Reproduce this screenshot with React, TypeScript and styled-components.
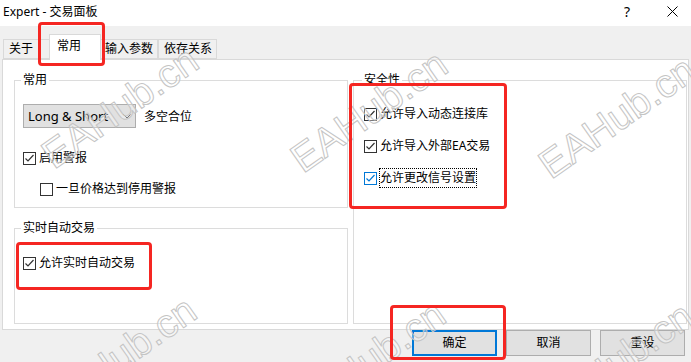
import React from "react";
import styled, { createGlobalStyle } from "styled-components";

const GlobalStyle = createGlobalStyle`
  html, body {
    margin: 0;
    padding: 0;
    background: #f0f0f0;
  }
  body {
    font-family: "Noto Sans", "Noto Sans CJK SC", sans-serif;
    font-size: 12px;
    color: #000;
  }
  * {
    box-sizing: border-box;
  }
`;

const Window = styled.div`
  position: relative;
  width: 691px;
  height: 362px;
  overflow: hidden;
  background: #f0f0f0;
  display: flex;
  flex-direction: column;
`;

const TitleBar = styled.div`
  height: 26px;
  flex: none;
  background: #fff;
  display: flex;
  align-items: center;
  padding-left: 3px;
`;

const Title = styled.div`
  flex: 1;
  line-height: 16px;
  margin-top: -2px;
`;

const TitleButton = styled.div<{ $w: number; $gap?: number }>`
  width: ${(p) => p.$w}px;
  margin-right: ${(p) => p.$gap ?? 0}px;
  height: 26px;
  display: flex;
  align-items: center;
  justify-content: center;
  font-size: 14px;
  margin-top: -4px;
`;

const Body = styled.div`
  flex: none;
  display: flex;
  flex-direction: column;
  padding: 8px 2px 0;
`;

const TabStrip = styled.div`
  height: 25px;
  display: flex;
  align-items: flex-end;
  padding-left: 1px;
  position: relative;
  z-index: 1;
`;

const Tab = styled.div<{ $active?: boolean }>`
  min-width: ${(p) => (p.$active ? 52 : 48)}px;
  height: ${(p) => (p.$active ? 26 : 20)}px;
  margin: ${(p) => (p.$active ? "0 -2px -1px" : "0")};
  padding: ${(p) => (p.$active ? "0 6px 3px 7px" : "0 4px 0 5px")};
  border: 1px solid #d9d9d9;
  border-bottom: ${(p) => (p.$active ? "none" : "1px solid #d9d9d9")};
  background: ${(p) => (p.$active ? "#fff" : "#f0f0f0")};
  position: relative;
  z-index: ${(p) => (p.$active ? 2 : 1)};
  display: flex;
  align-items: center;
  line-height: 16px;
  white-space: nowrap;
`;

const Panel = styled.div`
  height: 271px;
  background: #fff;
  border: 1px solid #d9d9d9;
  display: grid;
  grid-template-columns: 334px 334px;
  column-gap: 5px;
  padding: 12px 1px 5px 11px;
`;

const Column = styled.div`
  display: flex;
  flex-direction: column;
  gap: 12px;
`;

const Group = styled.fieldset<{ $h?: number; $inset: number }>`
  margin: 0;
  min-width: 0;
  height: ${(p) => (p.$h ? `${p.$h}px` : "auto")};
  flex: ${(p) => (p.$h ? "none" : "1")};
  border: 1px solid #dcdcdc;
  padding: 0 8px 0 ${(p) => p.$inset}px;
  display: flex;
  flex-direction: column;
  align-items: flex-start;

  legend {
    padding: 0 2px;
    margin-left: -2px;
    line-height: 16px;
    font-size: 12px;
  }
`;

const Stack = styled.div<{ $top: number; $gap?: number }>`
  display: flex;
  flex-direction: column;
  align-items: flex-start;
  padding-top: ${(p) => p.$top}px;
  gap: ${(p) => p.$gap ?? 0}px;
`;

const ComboRow = styled.div`
  display: flex;
  align-items: center;
  gap: 8px;
`;

const Combo = styled.div`
  width: 113px;
  height: 24px;
  background: #e1e1e1;
  border: 1px solid #adadad;
  display: flex;
  align-items: center;
  padding: 0 4px 0 4px;
  font-size: 13px;
  line-height: 18px;

  span {
    flex: 1;
  }
`;

const Row = styled.label<{ $indent?: number; $mt?: number }>`
  display: flex;
  align-items: center;
  gap: 2px;
  height: 20px;
  margin-left: ${(p) => p.$indent ?? 0}px;
  margin-top: ${(p) => p.$mt ?? 0}px;
`;

const Box = styled.span<{ $blue?: boolean }>`
  width: 13px;
  height: 13px;
  border: 1px solid ${(p) => (p.$blue ? "#0078d7" : "#333")};
  background: #fff;
  display: flex;
  align-items: center;
  justify-content: center;
`;

const RowText = styled.span<{ $focus?: boolean }>`
  border: 1px ${(p) => (p.$focus ? "dotted #000" : "solid transparent")};
  line-height: 18px;
  white-space: nowrap;
`;

const ButtonBar = styled.div`
  height: 26px;
  display: flex;
  justify-content: flex-end;
  gap: 9px;
  padding-right: 6px;
`;

const Button = styled.div<{ $default?: boolean }>`
  width: 85px;
  height: 26px;
  background: #e1e1e1;
  border: ${(p) => (p.$default ? "2px solid #0078d7" : "1px solid #adadad")};
  display: flex;
  align-items: center;
  justify-content: center;
  line-height: 16px;
`;

const Mark = styled.div<{ $x: number; $y: number; $w: number; $h: number }>`
  position: absolute;
  left: ${(p) => p.$x}px;
  top: ${(p) => p.$y}px;
  width: ${(p) => p.$w}px;
  height: ${(p) => p.$h}px;
  border: 3px solid #f52622;
  border-radius: 4px;
  pointer-events: none;
  z-index: 6;
`;

const Watermark = styled.div<{ $x: number; $y: number }>`
  position: absolute;
  left: ${(p) => p.$x}px;
  top: ${(p) => p.$y - 34}px;
  font-family: "Liberation Sans", Arial, sans-serif;
  font-size: 40px;
  line-height: 40px;
  white-space: nowrap;
  color: rgba(255, 255, 255, 0.35);
  -webkit-text-stroke: 1px #c4c4c4;
  transform-origin: 0 34px;
  transform: rotate(-35deg);
  pointer-events: none;
  z-index: 5;
`;

const Check = ({ blue }: { blue?: boolean }) => (
  <svg width="11" height="11" viewBox="0 0 11 11">
    <polyline
      points="1.5,5.5 4,8 9.5,2"
      fill="none"
      stroke={blue ? "#0078d7" : "#333"}
      strokeWidth="1.2"
    />
  </svg>
);

type CheckProps = {
  text: string;
  checked?: boolean;
  blue?: boolean;
  focus?: boolean;
  indent?: number;
  mt?: number;
};

const CheckRow = ({ text, checked, blue, focus, indent, mt }: CheckProps) => (
  <Row $indent={indent} $mt={mt}>
    <Box $blue={blue}>{checked && <Check blue={blue} />}</Box>
    <RowText $focus={focus}>{text}</RowText>
  </Row>
);

const marks = [
  { x: 38, y: 22, w: 67, h: 44 },
  { x: 16, y: 242, w: 136, h: 48 },
  { x: 349, y: 83, w: 158, h: 126 },
  { x: 390, y: 305, w: 116, h: 55 },
];

const watermarks = [
  { x: 54, y: 170 },
  { x: 303, y: 174 },
  { x: 551, y: 180 },
  { x: 52, y: 420 },
  { x: 301, y: 424 },
  { x: 549, y: 426 },
];

export default function App() {
  return (
    <>
      <GlobalStyle />
      <Window>
        <TitleBar>
          <Title>Expert - 交易面板</Title>
          <TitleButton $w={44} $gap={5}>?</TitleButton>
          <TitleButton $w={37}>
            <svg width="11" height="11" viewBox="0 0 11 11">
              <path d="M0.5 0.5 L10.5 10.5 M10.5 0.5 L0.5 10.5" stroke="#000" strokeWidth="1" />
            </svg>
          </TitleButton>
        </TitleBar>

        <Body>
          <TabStrip>
            <Tab>关于</Tab>
            <Tab $active>常用</Tab>
            <Tab>输入参数</Tab>
            <Tab>依存关系</Tab>
          </TabStrip>

          <Panel>
            <Column>
              <Group $h={136} $inset={8}>
                <legend>常用</legend>
                <Stack $top={16}>
                  <ComboRow>
                    <Combo>
                      <span>Long &amp; Short</span>
                      <svg width="8" height="5" viewBox="0 0 8 5">
                        <polyline points="0.5,0.5 4,4 7.5,0.5" fill="none" stroke="#333" strokeWidth="1" />
                      </svg>
                    </Combo>
                    <span>多空合位</span>
                  </ComboRow>
                  <CheckRow text="启用警报" checked mt={20} />
                  <CheckRow text="一旦价格达到停用警报" indent={17} mt={11} />
                </Stack>
              </Group>
              <Group $inset={8}>
                <legend>实时自动交易</legend>
                <Stack $top={17}>
                  <CheckRow text="允许实时自动交易" checked />
                </Stack>
              </Group>
            </Column>

            <Group $inset={10}>
              <legend>安全性</legend>
              <Stack $top={16} $gap={12}>
                <CheckRow text="允许导入动态连接库" checked />
                <CheckRow text="允许导入外部EA交易" checked />
                <CheckRow text="允许更改信号设置" checked blue focus />
              </Stack>
            </Group>
          </Panel>
        </Body>

        <ButtonBar>
          <Button $default>确定</Button>
          <Button>取消</Button>
          <Button>重设</Button>
        </ButtonBar>

        {watermarks.map((w, i) => (
          <Watermark key={i} $x={w.x} $y={w.y}>
            EAHub.cn
          </Watermark>
        ))}
        {marks.map((m, i) => (
          <Mark key={i} $x={m.x} $y={m.y} $w={m.w} $h={m.h} />
        ))}
      </Window>
    </>
  );
}
